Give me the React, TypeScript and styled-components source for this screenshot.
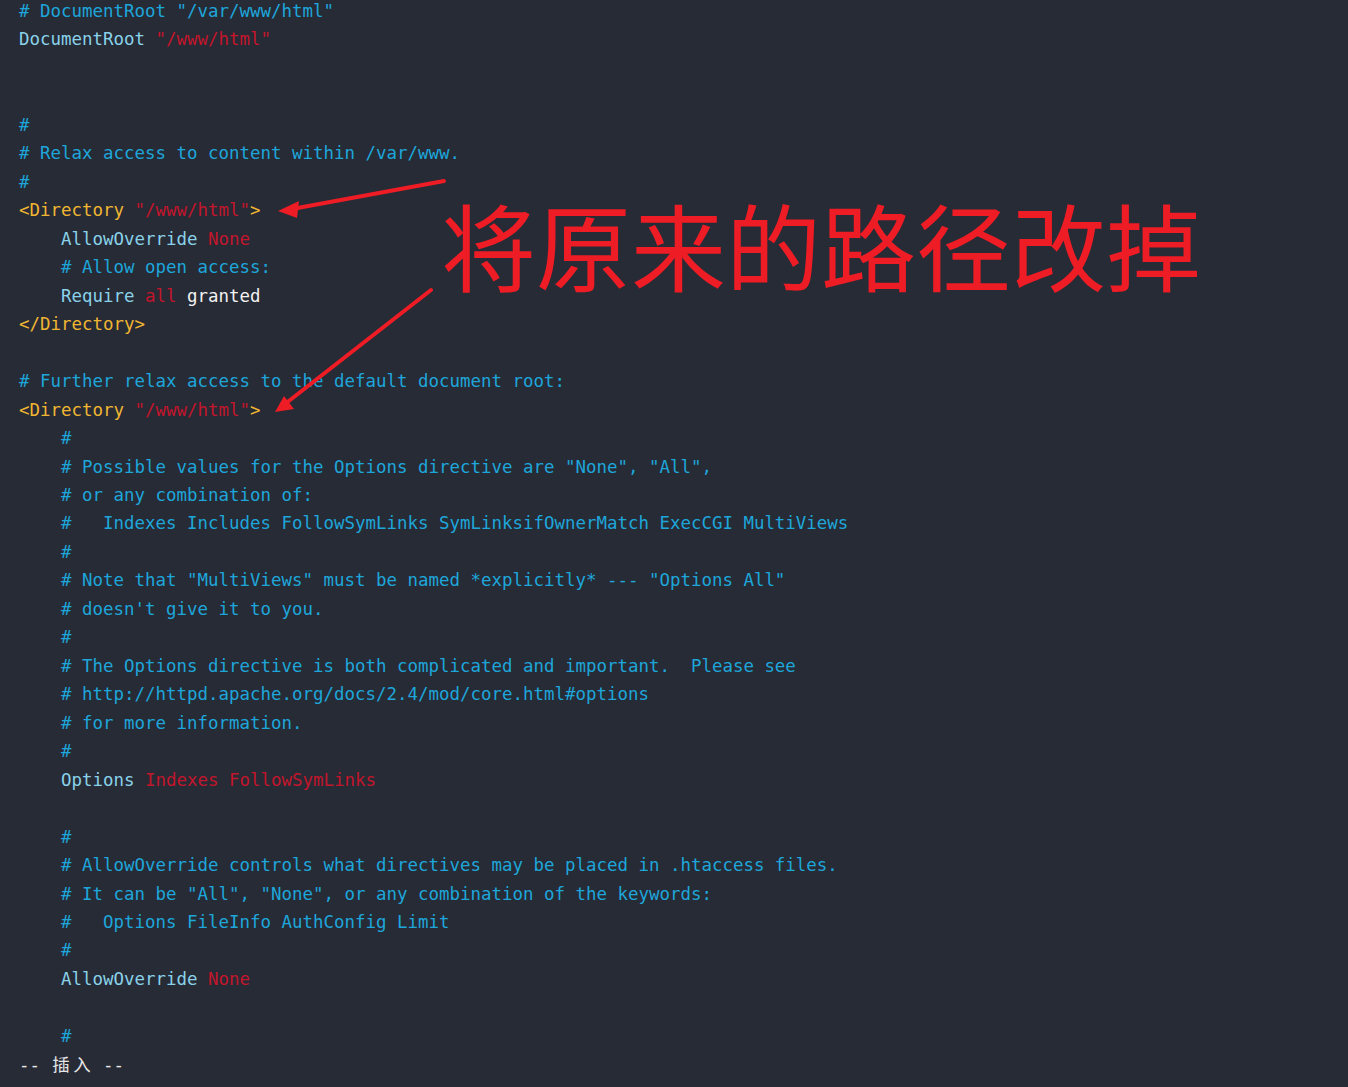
import React from "react";
import styled, { createGlobalStyle } from "styled-components";

const Global = createGlobalStyle`
  html, body {
    margin: 0;
    padding: 0;
    background: #262b36;
    overflow: hidden;
  }
`;

type Kind = "comment" | "kw" | "str" | "tag" | "plain" | "status";

const colors: Record<Kind, string> = {
  comment: "#1ea6da",
  kw: "#8ad2e9",
  str: "#c3152b",
  tag: "#f0b632",
  plain: "#f2f2f2",
  status: "#e6e6e6",
};

const Screen = styled.div`
  position: relative;
  width: 1348px;
  height: 1087px;
  overflow: hidden;
  background: #262b36;
`;

const Editor = styled.div`
  display: flex;
  flex-direction: column;
  margin-top: -3px;
  padding-left: 19px;
  font-family: "DejaVu Sans Mono", "Liberation Mono", monospace;
  font-size: 17.44px;
  white-space: pre;
`;

const Line = styled.div`
  height: 28.48px;
  line-height: 28.48px;
`;

const Tok = styled.span<{ $kind: Kind }>`
  color: ${(p) => colors[p.$kind]};
`;

const Wide = styled.span`
  display: inline-block;
  width: 21px;
  text-align: center;
  font-family: "Noto Sans CJK SC", sans-serif;
  color: ${colors.status};
`;

const Annotation = styled.div`
  position: absolute;
  left: 441px;
  top: 196px;
  font-family: "Noto Sans CJK SC", sans-serif;
  font-size: 95px;
  line-height: 1;
  color: #ee1c25;
  white-space: nowrap;
`;

const Arrows = styled.svg`
  position: absolute;
  left: 0;
  top: 0;
  pointer-events: none;
`;

type T = [Kind, string];
const C = (s: string): T[] => [["comment", s]];

const lines: T[][] = [
  C('# DocumentRoot "/var/www/html"'),
  [["kw", "DocumentRoot"], ["plain", " "], ["str", '"/www/html"']],
  [],
  [],
  C("#"),
  C("# Relax access to content within /var/www."),
  C("#"),
  [["tag", "<Directory"], ["plain", " "], ["str", '"/www/html"'], ["tag", ">"]],
  [["plain", "    "], ["kw", "AllowOverride"], ["plain", " "], ["str", "None"]],
  [["plain", "    "], ["comment", "# Allow open access:"]],
  [["plain", "    "], ["kw", "Require"], ["plain", " "], ["str", "all"], ["plain", " granted"]],
  [["tag", "</Directory>"]],
  [],
  C("# Further relax access to the default document root:"),
  [["tag", "<Directory"], ["plain", " "], ["str", '"/www/html"'], ["tag", ">"]],
  C("    #"),
  C('    # Possible values for the Options directive are "None", "All",'),
  C("    # or any combination of:"),
  C("    #   Indexes Includes FollowSymLinks SymLinksifOwnerMatch ExecCGI MultiViews"),
  C("    #"),
  C('    # Note that "MultiViews" must be named *explicitly* --- "Options All"'),
  C("    # doesn't give it to you."),
  C("    #"),
  C("    # The Options directive is both complicated and important.  Please see"),
  C("    # http://httpd.apache.org/docs/2.4/mod/core.html#options"),
  C("    # for more information."),
  C("    #"),
  [["plain", "    "], ["kw", "Options"], ["plain", " "], ["str", "Indexes FollowSymLinks"]],
  [],
  C("    #"),
  C("    # AllowOverride controls what directives may be placed in .htaccess files."),
  C('    # It can be "All", "None", or any combination of the keywords:'),
  C("    #   Options FileInfo AuthConfig Limit"),
  C("    #"),
  [["plain", "    "], ["kw", "AllowOverride"], ["plain", " "], ["str", "None"]],
  [],
  C("    #"),
];

export default function App() {
  return (
    <Screen>
      <Global />
      <Editor>
        {lines.map((toks, i) => (
          <Line key={i}>
            {toks.length === 0
              ? " "
              : toks.map(([k, s], j) => (
                  <Tok key={j} $kind={k}>
                    {s}
                  </Tok>
                ))}
          </Line>
        ))}
        <Line>
          <Tok $kind="status">{"-- "}</Tok>
          <Wide>插</Wide>
          <Wide>入</Wide>
          <Tok $kind="status">{" --"}</Tok>
        </Line>
      </Editor>
      <Annotation>将原来的路径改掉</Annotation>
      <Arrows width="1348" height="1087" viewBox="0 0 1348 1087">
        <line x1="444" y1="181" x2="292" y2="209" stroke="#ee1c25" strokeWidth="4" strokeLinecap="round" />
        <polygon points="278,211 299,201 297,218" fill="#ee1c25" />
        <line x1="431" y1="290" x2="285" y2="404" stroke="#ee1c25" strokeWidth="4" strokeLinecap="round" />
        <polygon points="275,412 284,396 294,409" fill="#ee1c25" />
      </Arrows>
    </Screen>
  );
}
